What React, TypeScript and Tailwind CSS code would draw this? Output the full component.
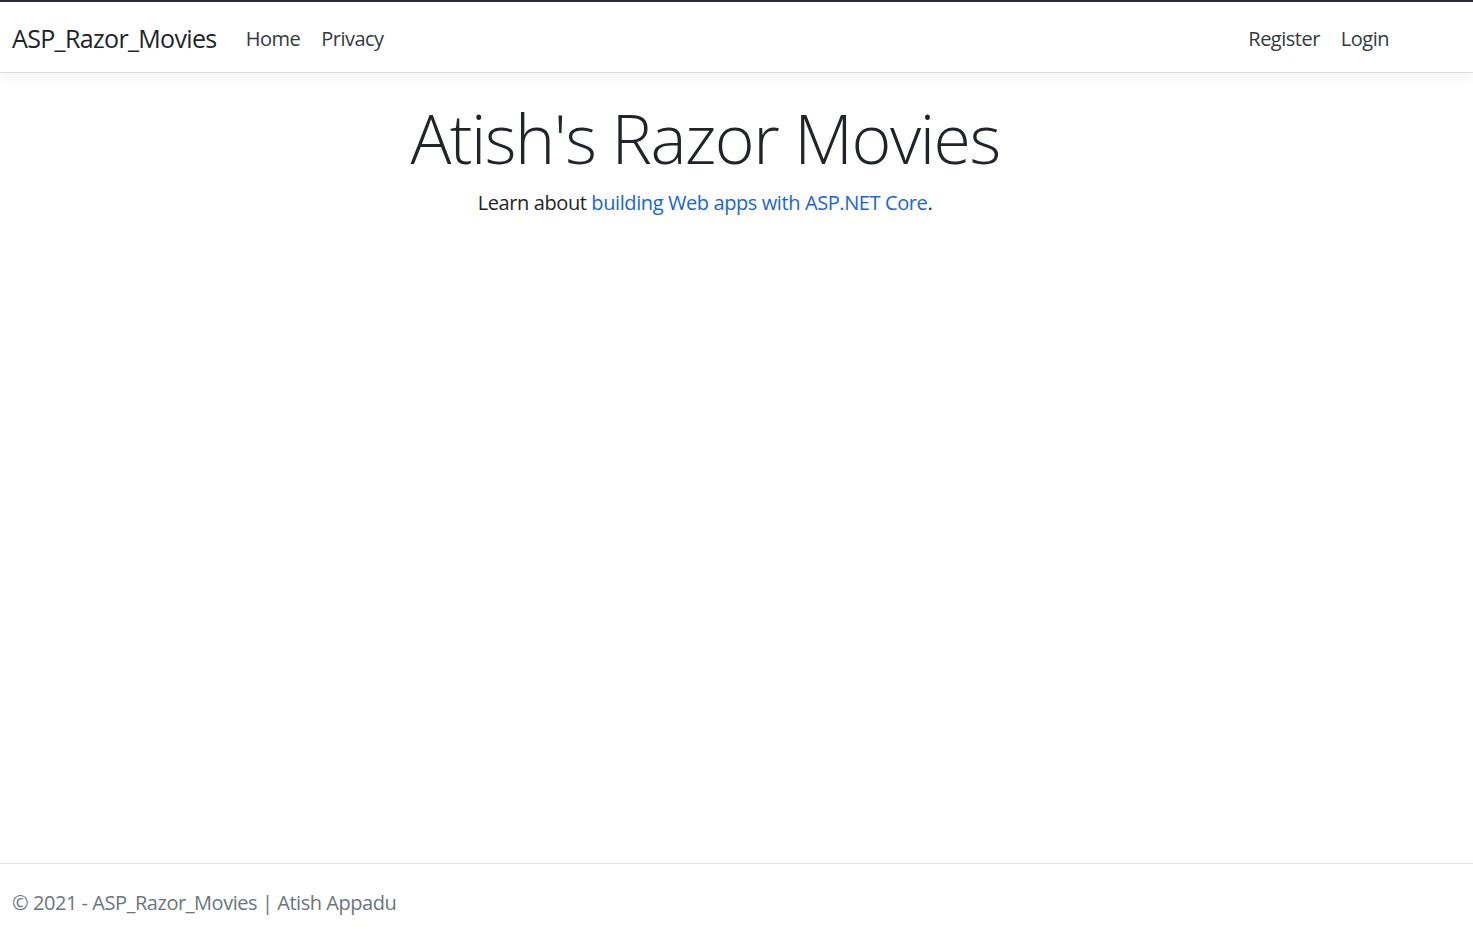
import React from "react";

export default function App() {
  const font = { fontFamily: '"Open Sans", "Noto Sans", sans-serif' };
  return (
    <div className="w-[1473px] h-[931px] flex flex-col bg-white overflow-hidden" style={font}>
      <div className="h-[2px] bg-[#2d2d37]" />
      <header className="h-[71px] flex items-center border-b border-[#dedede] shadow-[0_4px_14px_rgba(0,0,0,0.05)] relative z-10">
        <div className="w-[1410px] flex items-center pl-[12px] pt-[3px]">
          <span className="text-[25px] text-[#212529] tracking-[-0.65px] mr-[29px]">ASP_Razor_Movies</span>
          <nav className="flex items-center gap-[21px] text-[20px] text-[#343a40] tracking-[-0.5px]">
            <a>Home</a>
            <a>Privacy</a>
          </nav>
          <nav className="ml-auto flex items-center gap-[21px] text-[20px] text-[#343a40] tracking-[-0.5px] pr-[21px]">
            <a>Register</a>
            <a>Login</a>
          </nav>
        </div>
      </header>
      <main className="flex-1 w-[1410px] text-center pt-[24px]">
        <h1 className="text-[68px] font-light text-[#212529] leading-[1.2] tracking-[-1.5px]">Atish's Razor Movies</h1>
        <p className="mt-[9px] text-[20px] text-[#212529] tracking-[-0.4px]">
          Learn about <a className="text-[#1766dc]">building Web apps with ASP.NET Core</a>.
        </p>
      </main>
      <footer className="h-[68px] border-t border-[#e5e5e5] flex items-center pl-[12px] pt-[10px] text-[20px] text-[#6c757d] tracking-[-0.45px]">
        © 2021 - ASP_Razor_Movies | Atish Appadu
      </footer>
    </div>
  );
}
